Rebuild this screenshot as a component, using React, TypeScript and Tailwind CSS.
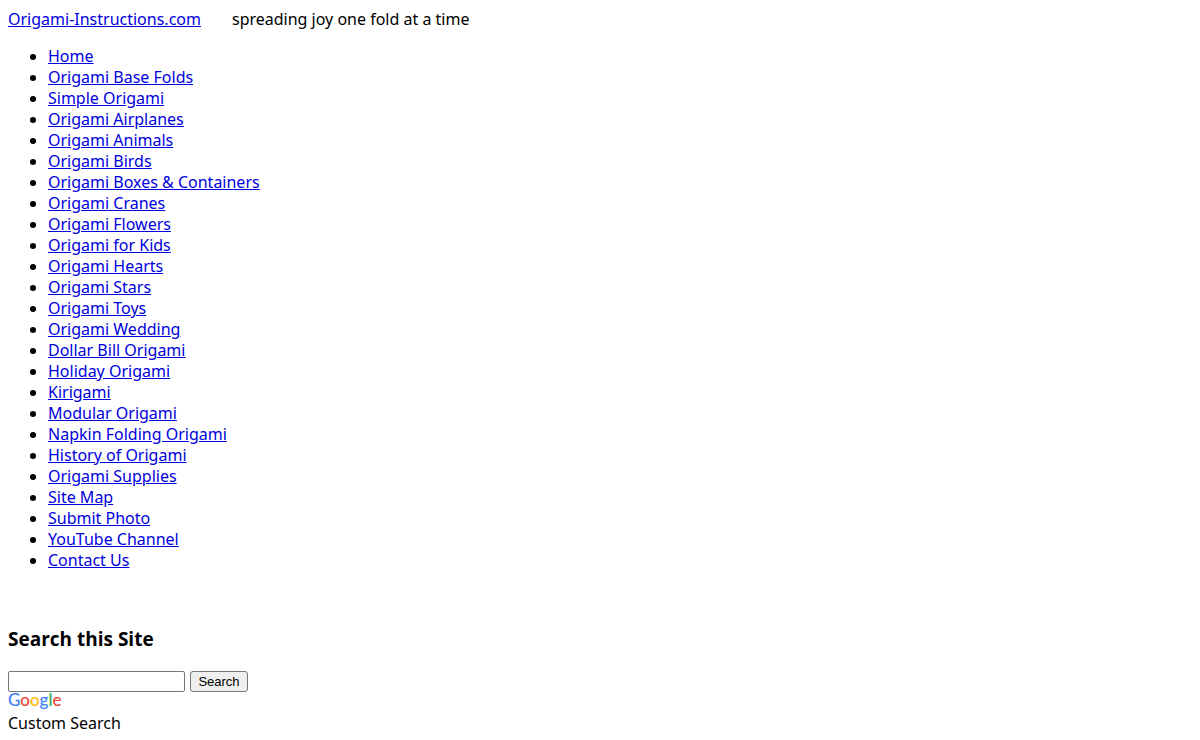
import React from 'react';

const links = [
  'Home',
  'Origami Base Folds',
  'Simple Origami',
  'Origami Airplanes',
  'Origami Animals',
  'Origami Birds',
  'Origami Boxes & Containers',
  'Origami Cranes',
  'Origami Flowers',
  'Origami for Kids',
  'Origami Hearts',
  'Origami Stars',
  'Origami Toys',
  'Origami Wedding',
  'Dollar Bill Origami',
  'Holiday Origami',
  'Kirigami',
  'Modular Origami',
  'Napkin Folding Origami',
  'History of Origami',
  'Origami Supplies',
  'Site Map',
  'Submit Photo',
  'YouTube Channel',
  'Contact Us',
];

function GoogleLogo() {
  return (
    <svg className="block h-[21px] w-14 overflow-visible" viewBox="0 0 56 21" role="img" aria-label="Google">
      <text x="0" y="14" strokeWidth="0.2" className="font-['Lato',sans-serif] text-[17px]">
        <tspan fill="#4285f4" stroke="#4285f4">G</tspan>
        <tspan fill="#ea4335" stroke="#ea4335">o</tspan>
        <tspan fill="#fbbc05" stroke="#fbbc05">o</tspan>
        <tspan fill="#4285f4" stroke="#4285f4">g</tspan>
        <tspan fill="#34a853" stroke="#34a853">l</tspan>
        <tspan fill="#ea4335" stroke="#ea4335">e</tspan>
      </text>
    </svg>
  );
}

export default function App() {
  return (
    <div className="bg-white px-2 pt-[9px] font-['Noto_Sans',sans-serif] text-[16px] leading-[21px] text-black">
      <header className="flex gap-[31px]">
        <a href="#" className="text-[#0000e0] underline">
          Origami-Instructions.com
        </a>
        <span>spreading joy one fold at a time</span>
      </header>

      <nav>
        <ul className="my-4 list-disc pl-10">
          {links.map((label) => (
            <li key={label}>
              <a href="#" className="text-[#0000e0] underline">
                {label}
              </a>
            </li>
          ))}
        </ul>
      </nav>

      <section className="pt-10">
        <h3 className="mb-[19px] font-['Open_Sans',sans-serif] text-[19px] leading-[25px] font-bold">Search this Site</h3>
        <form className="flex gap-[5px]" onSubmit={(e) => e.preventDefault()}>
          <input
            type="text"
            aria-label="Search this Site"
            className="h-[21px] w-[177px] rounded-[2px] border border-[#767676] bg-white px-0.5 font-['Liberation_Sans',sans-serif] text-[13px]"
          />
          <button
            type="submit"
            className="h-[21px] w-[58px] rounded-[3px] border border-[#767676] bg-[#efefef] font-['Liberation_Sans',sans-serif] text-[13px] leading-[19px]"
          >
            Search
          </button>
        </form>
        <GoogleLogo />
        <div>Custom Search</div>
      </section>
    </div>
  );
}
